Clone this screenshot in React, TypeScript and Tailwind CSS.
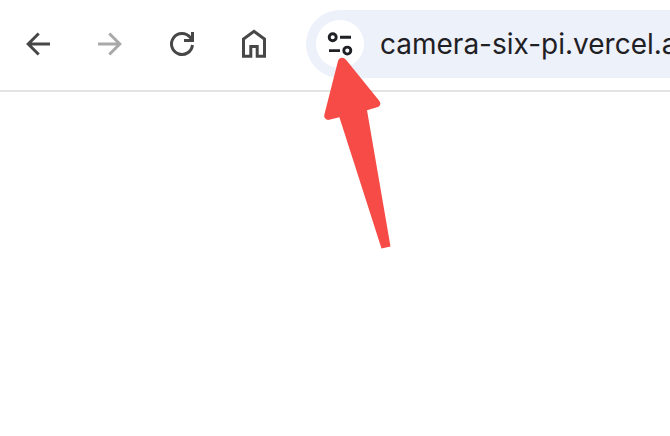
import type { ReactNode } from "react";

function ToolbarButton({ label, children }: { label: string; children: ReactNode }) {
  return (
    <button aria-label={label} className="flex h-[72px] w-[72px] shrink-0 items-center justify-center">
      <svg width="36" height="36" viewBox="0 0 36 36" fill="none" stroke="currentColor" strokeWidth="3">
        {children}
      </svg>
    </button>
  );
}

function SiteSettings() {
  return (
    <div className="flex size-12 shrink-0 items-center justify-center rounded-full bg-white text-[#1f2024]">
      <svg width="32" height="32" viewBox="0 0 32 32" fill="none" stroke="currentColor" strokeWidth="2.9">
        <circle cx="8.7" cy="9.2" r="3.5" />
        <path d="M16 9.2H27M5 22.6H16" />
        <circle cx="23.3" cy="22.6" r="3.5" />
      </svg>
    </div>
  );
}

export default function App() {
  return (
    <div className="relative h-[436px] w-[670px] overflow-hidden bg-white">
      <header className="flex h-[92px] items-start border-b-2 border-[#e3e3e3] pl-0.5 pt-2 text-[#474747]">
        <ToolbarButton label="Back">
          <path d="M30 18H8.2M18.7 7.5L8.2 18L18.7 28.5" />
        </ToolbarButton>
        <div className="text-[#a9a9a9]">
          <ToolbarButton label="Forward">
            <path d="M6 18H27.8M17.3 7.5L27.8 18L17.3 28.5" />
          </ToolbarButton>
        </div>
        <ToolbarButton label="Reload">
          <path d="M28.45 19A10.5 10.5 0 1 1 26.2 11.4L28 14M20 14.5H28.5M28.5 6V16" />
        </ToolbarButton>
        <ToolbarButton label="Home">
          <path d="M7.5 30.3V13L18 5.4L28.5 13V30.3H21.2V20.5H14.8V30.3Z" />
        </ToolbarButton>
        <div className="ml-4 mt-0.5 flex h-[68px] min-w-0 grow items-center overflow-hidden rounded-l-full bg-[#edf1fa] pl-2.5">
          <SiteSettings />
          <span className="ml-4 whitespace-nowrap font-['Inter',sans-serif] text-[28px] leading-9 text-[#1f2024]">
            camera-six-pi.vercel.a
          </span>
        </div>
      </header>
      <svg className="absolute left-[310px] top-[50px]" width="90" height="210" viewBox="0 0 90 210" fill="#f64b46">
        <path d="M28.2 10.2Q29.6 7.8 32 7.8Q34.5 7.8 36 9.8L69 50.5Q71.3 53.5 69.6 55.7Q68.8 56.9 67 57.3L57 60.3L80.5 196.5L71.5 198.6L29.4 67.2L19 69.8Q16 70.3 14.5 67.5Q13.9 66.2 14.5 64Z" />
      </svg>
    </div>
  );
}
